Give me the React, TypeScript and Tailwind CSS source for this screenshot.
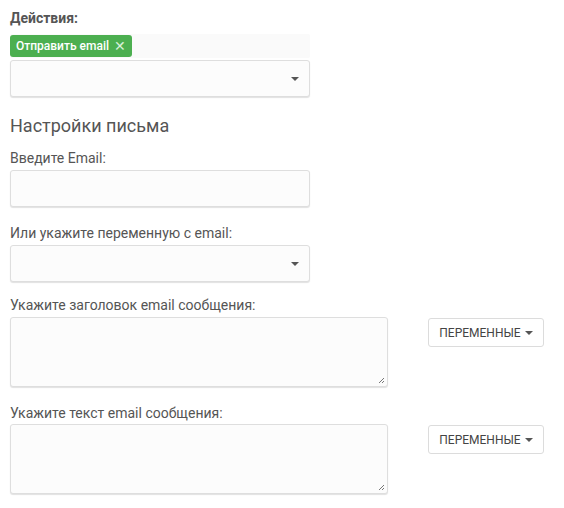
import React from "react";

const Caret = ({ w = 9 }: { w?: number }) => (
  <svg width={w} height={Math.round(w / 2)} viewBox="0 0 8 4" className="inline-block">
    <path d="M0 0 L8 0 L4 4 Z" fill="#555" />
  </svg>
);

const boxCls =
  "rounded-[3px] border border-[#dedede] bg-[#fcfcfc] shadow-[0_1px_1px_rgba(0,0,0,0.12)]";

const SelectBox = () => (
  <div className={`${boxCls} w-[300px] h-[37px] flex items-center justify-end pr-[10px]`}>
    <Caret w={8} />
  </div>
);

const Label = ({ children, className = "" }: { children: React.ReactNode; className?: string }) => (
  <div className={`text-[14px] leading-[20px] text-[#555] ${className}`}>{children}</div>
);

const TextareaRow = () => (
  <div className="flex items-start">
    <div className={`${boxCls} w-[378px] h-[70px] relative`}>
      <svg width="7" height="7" viewBox="0 0 7 7" className="absolute right-[2px] bottom-[2px]">
        <path d="M6 1 L1 6 M6 4 L4 6" stroke="#777" strokeWidth="1" />
      </svg>
    </div>
    <button className="ml-[40px] mt-[1px] h-[29px] w-[116px] rounded-[3px] border border-[#dcdcdc] bg-white text-[12px] text-[#444] flex items-center justify-center gap-[4px]">
      ПЕРЕМЕННЫЕ <Caret w={8} />
    </button>
  </div>
);

export default function App() {
  return (
    <div
      className="w-[564px] h-[508px] bg-white px-[10px] pt-[8px]"
      style={{ fontFamily: "Roboto, 'Noto Sans', sans-serif" }}
    >
      <Label className="font-bold leading-[20px]">Действия:</Label>
      <div className="mt-[6px] w-[300px] h-[24px] bg-[#fafafa] rounded-[2px] flex items-center">
        <span className="h-[22px] px-[6px] rounded-[3px] bg-[#4caf50] text-white text-[12px] font-medium flex items-center gap-[5px]">
          Отправить email <span className="text-[14px] font-light text-[#d8efd9]">✕</span>
        </span>
      </div>
      <div className="mt-[2px]">
        <SelectBox />
      </div>
      <div className="mt-[17px] text-[18px] leading-[24px] text-[#555]">Настройки письма</div>
      <Label className="mt-[10px]">Введите Email:</Label>
      <div className={`${boxCls} mt-[2px] w-[300px] h-[37px]`} />
      <Label className="mt-[16px]">Или укажите переменную с email:</Label>
      <div className="mt-[2px]">
        <SelectBox />
      </div>
      <Label className="mt-[13px]">Укажите заголовок email сообщения:</Label>
      <div className="mt-[2px]">
        <TextareaRow />
      </div>
      <Label className="mt-[16px]">Укажите текст email сообщения:</Label>
      <div className="mt-[1px]">
        <TextareaRow />
      </div>
    </div>
  );
}
